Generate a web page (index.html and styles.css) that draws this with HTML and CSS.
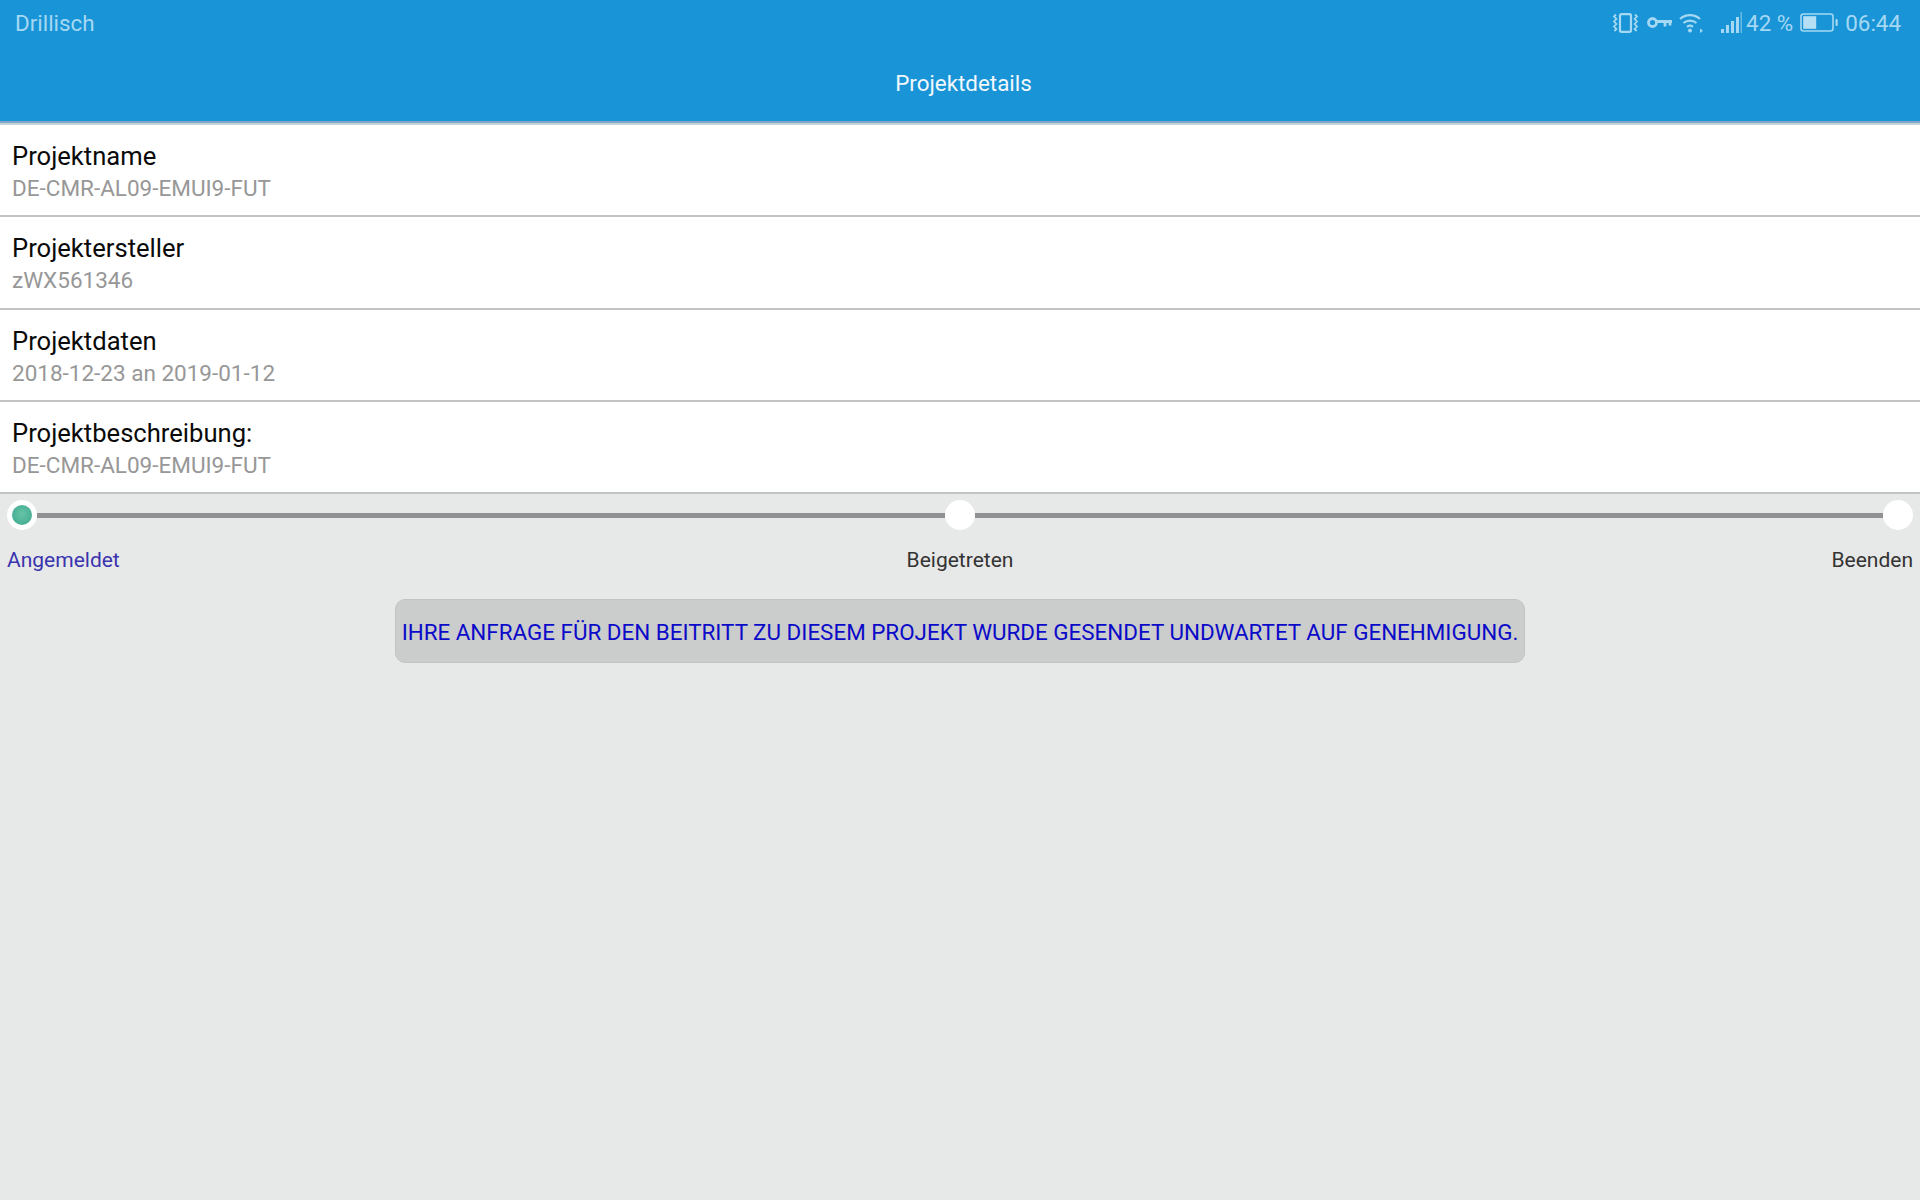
FILE: index.html
```html
<!DOCTYPE html>
<html lang="de">
<head>
<meta charset="utf-8">
<title>Projektdetails</title>
<link rel="stylesheet" href="styles.css">
</head>
<body>
<header class="header">
  <div class="status">
    <span class="carrier">Drillisch</span>
    <div class="status-right">
      <svg class="ic-vib" width="27" height="20" viewBox="0 0 27 20" fill="none" stroke="#a5d8f3" stroke-width="2.2">
        <rect x="8" y="1.2" width="11" height="17.6" rx="1.5"/>
        <path d="M4 1.5 l-2 2 l2.4 2.5 l-2.4 2.5 l2.4 2.5 l-2.4 2.5 l2.4 2.5 l-2 2" stroke-width="1.8"/>
        <path d="M23 1.5 l2 2 l-2.4 2.5 l2.4 2.5 l-2.4 2.5 l2.4 2.5 l-2.4 2.5 l2 2" stroke-width="1.8"/>
      </svg>
      <svg class="ic-key" width="25" height="13" viewBox="0 0 25 13" fill="none" stroke="#a5d8f3">
        <circle cx="5.5" cy="6.5" r="4" stroke-width="2.8"/>
        <path d="M10 5.5 H25 M18 5.5 V10.5 M23 5.5 V9.5" stroke-width="2.8"/>
      </svg>
      <svg class="ic-wifi" width="24" height="20" viewBox="0 0 24 20" fill="none" stroke="#a5d8f3" stroke-width="2.2">
        <path d="M1 6 A15 15 0 0 1 21 6"/>
        <path d="M4.5 10 A10 10 0 0 1 17.5 10"/>
        <path d="M8 13.8 A5 5 0 0 1 14 13.8"/>
        <circle cx="11" cy="17.5" r="2" fill="#a5d8f3" stroke="none"/>
        <path d="M21 15.5 l3 2.2 l-3 2.2 z" fill="#a5d8f3" stroke="none"/>
      </svg>
      <svg class="ic-signal" width="21" height="22" viewBox="0 0 21 22" fill="#a5d8f3">
        <rect x="0" y="17" width="3" height="4"/>
        <rect x="5" y="13" width="3" height="8"/>
        <rect x="10" y="9" width="3" height="12"/>
        <rect x="15" y="5" width="3" height="16"/>
        <rect x="19.5" y="0" width="1.5" height="21" opacity=".55"/>
      </svg>
      <span class="pct">42 %</span>
      <svg class="ic-batt" width="38" height="19" viewBox="0 0 38 19" fill="none">
        <rect x="1" y="1" width="32" height="17" rx="2.5" stroke="#a5d8f3" stroke-width="1.6"/>
        <rect x="3.2" y="3.2" width="13" height="12.6" fill="#b5dff5"/>
        <rect x="35.5" y="6" width="2.2" height="7" rx="1" fill="#a5d8f3"/>
      </svg>
      <span class="time">06:44</span>
    </div>
  </div>
  <h1 class="title">Projektdetails</h1>
</header>

<main>
  <section class="row">
    <div class="row-label">Projektname</div>
    <div class="row-value">DE-CMR-AL09-EMUI9-FUT</div>
  </section>
  <section class="row">
    <div class="row-label">Projektersteller</div>
    <div class="row-value">zWX561346</div>
  </section>
  <section class="row">
    <div class="row-label">Projektdaten</div>
    <div class="row-value">2018-12-23 an 2019-01-12</div>
  </section>
  <section class="row">
    <div class="row-label">Projektbeschreibung:</div>
    <div class="row-value">DE-CMR-AL09-EMUI9-FUT</div>
  </section>

  <div class="stepper">
    <span class="dot dot-active"></span>
    <span class="line"></span>
    <span class="dot"></span>
    <span class="line"></span>
    <span class="dot"></span>
  </div>
  <div class="step-labels">
    <span class="step-label step-current">Angemeldet</span>
    <span class="step-label">Beigetreten</span>
    <span class="step-label">Beenden</span>
  </div>

  <div class="notice-wrap">
    <div class="notice">IHRE ANFRAGE FÜR DEN BEITRITT ZU DIESEM PROJEKT WURDE GESENDET UNDWARTET AUF GENEHMIGUNG.</div>
  </div>
</main>
</body>
</html>
```

FILE: styles.css
```css
* { box-sizing: border-box; }

html, body {
  margin: 0;
  height: 100%;
}

body {
  background: #e7e8e8;
  font-family: Roboto, "Liberation Sans", sans-serif;
  overflow: hidden;
}

.header {
  height: 125px;
  background: linear-gradient(to bottom, #1994d6 121px, #7fa9c6 121px, #7fa9c6 123px, #c5d2da 123px);
}

.status {
  height: 46px;
  padding: 0 19px 1px 15px;
  display: flex;
  align-items: center;
  justify-content: space-between;
  color: #a5d8f3;
  font-size: 22.4px;
}

.status-right {
  display: flex;
  align-items: center;
}

.ic-vib { margin-right: 8px; }
.ic-key { margin-right: 7px; }
.ic-wifi { margin-right: 18px; }
.ic-signal { margin-right: 4px; }
.pct { margin-right: 7px; }
.ic-batt { margin-right: 7px; }

.title {
  margin: 0;
  height: 75px;
  display: flex;
  align-items: center;
  justify-content: center;
  padding: 0 0 2px 7px;
  color: #f1f8fc;
  font-size: 22.4px;
  font-weight: 400;
}

.row {
  height: 92.33px;
  padding: 16px 12px 0;
  background: #fff;
  border-bottom: 2px solid #c2c3c3;
}

.row-label {
  color: #0a0a0a;
  font-size: 25.6px;
  line-height: 30px;
}

.row-value {
  margin-top: 4px;
  color: #979797;
  font-size: 22.5px;
  line-height: 26px;
}

.stepper {
  height: 30px;
  margin-top: 6px;
  padding: 0 7px;
  display: flex;
  align-items: center;
}

.dot {
  flex: none;
  width: 30px;
  height: 30px;
  border-radius: 50%;
  background: #fff;
}

.dot-active {
  border: 5px solid #fff;
  background: radial-gradient(circle at 50% 45%, #67c4a6, #3aa68e);
}

.line {
  flex: 1;
  height: 5px;
  background: #8f9193;
}

.step-labels {
  margin-top: 17px;
  padding: 0 7px;
  display: grid;
  grid-template-columns: 1fr auto 1fr;
}

.step-label {
  color: #333;
  font-size: 21px;
  line-height: 26px;
}

.step-label:last-child { text-align: right; }

.step-current { color: #3a34ae; }

.notice-wrap {
  margin-top: 26px;
  display: flex;
  justify-content: center;
}

.notice {
  width: 1130px;
  height: 64px;
  padding-top: 1px;
  display: flex;
  align-items: center;
  justify-content: center;
  white-space: nowrap;
  background: #cbcccc;
  border: 1px solid #c2c3c3;
  border-radius: 10px;
  color: #0a0ac8;
  font-size: 22.4px;
}
```
